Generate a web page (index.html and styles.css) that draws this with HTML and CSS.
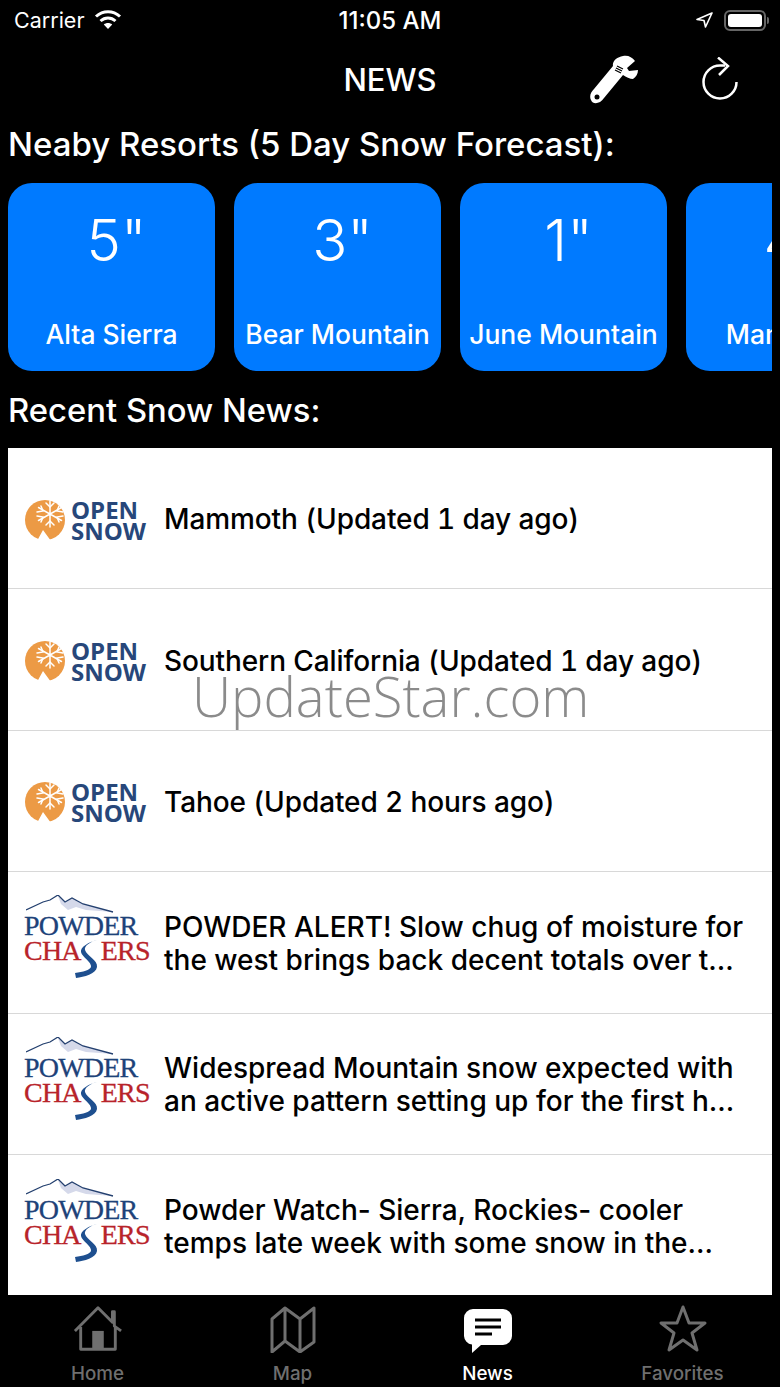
FILE: index.html
```html
<!DOCTYPE html>
<html lang="en">
<head>
    <meta charset="UTF-8">
    <meta name="viewport" content="width=device-width, initial-scale=1.0">
    <title>News</title>
    <link rel="stylesheet" href="styles.css">
</head>
<body>
    <svg class="defs" width="0" height="0">
        <symbol id="sun" viewBox="0 0 42 40">
            <circle cx="20" cy="20" r="20" fill="#ec9a45"/>
            <path fill="#fff" d="M12 41l6-11 8 11zM33 41l7-15h2v15z"/>
            <g stroke="#fff" stroke-width="1.500" fill="none" stroke-linecap="round">
                <path d="M25 1v26M13.500 7.500l23 13M36.500 7.500l-23 13"/>
                <path d="M21 3l4 4 4-4M12 12l6-1-2-5M38 12l-6-1 2-5M12 16l6 1-2 5M38 16l-6 1 2 5M21 25l4-4 4 4"/>
            </g>
        </symbol>
        <symbol id="peaks" viewBox="0 0 88 18">
            <path fill="#d5d9ea" d="M32 1l7 6 7-4 11 6 30 8-27-2-10-3-8 3-7-6z"/>
            <path fill="none" stroke="#24406f" stroke-width="1.300" d="M0 15l17-8 7-2 8-5 7 7 7-4 11 6 30 8"/>
        </symbol>
        <symbol id="road" viewBox="0 0 26 40">
            <path fill="#1e4f8f" d="M23 1C15 3 6 8 7 13c1 5 11 10 10 15-1 3-8 5-16 6l1 5c8-1 20-4 21-11 1-7-10-11-12-17-1-4 5-8 12-10z"/>
        </symbol>
    </svg>

    <div class="status-bar">
        <div class="status-left">
            <span>Carrier</span>
            <svg class="wifi" viewBox="0 0 28 20">
                <path fill="none" stroke="#fff" stroke-width="3" d="M2 7.500c7-6.500 17-6.500 24 0M6.500 12c4.500-4 10.500-4 15 0"/>
                <path fill="#fff" d="M14 20l-4.200-4.500c2.500-2 5.900-2 8.400 0z"/>
            </svg>
        </div>
        <div class="status-time">11:05 AM</div>
        <div class="status-right">
            <svg class="location" viewBox="0 0 17 16">
                <path fill="none" stroke="#fff" stroke-width="1.600" stroke-linejoin="round" d="M16 1L1 7.500l7 1 1.500 6.500z"/>
            </svg>
            <div class="battery"><div class="battery-fill"></div></div>
            <div class="battery-cap"></div>
        </div>
    </div>

    <div class="nav-bar">
        <h1>NEWS</h1>
        <div class="nav-actions">
            <svg class="wrench" viewBox="0 0 48 50">
                <path fill="#fff" d="M33 1C38 0 42 2 45 6L37 13 39 16 48 15C48 19 46 22 43 24 40 24 36 22 33 20L14 43C10 49 3 50 1 45-1 41 1 37 4 34L23 11C22 6 27 2 33 1Z"/>
                <circle cx="7" cy="42" r="2.500" fill="#000"/>
                <path stroke="#000" stroke-width="1.200" d="M26 13l6 3M27 11l6 3M25 15l6 3"/>
            </svg>
            <svg class="refresh" viewBox="0 0 38 44">
                <path fill="none" stroke="#fff" stroke-width="2.500" d="M24 8.500H19A16.500 16.500 0 1 0 35.500 25"/>
                <path fill="none" stroke="#fff" stroke-width="2.500" d="M17 0.500l10 8.500-9 9"/>
            </svg>
        </div>
    </div>

    <h2 class="section-title first">Neaby Resorts (5 Day Snow Forecast):</h2>

    <div class="resorts">
        <div class="resort"><div class="snow">5"</div><div class="resort-name">Alta Sierra</div></div>
        <div class="resort"><div class="snow">3"</div><div class="resort-name">Bear Mountain</div></div>
        <div class="resort"><div class="snow">1"</div><div class="resort-name">June Mountain</div></div>
        <div class="resort"><div class="snow">4"</div><div class="resort-name">Mammoth</div></div>
    </div>

    <h2 class="section-title second">Recent Snow News:</h2>

    <div class="news-list">
        <div class="news-row">
            <div class="logo-open">
                <svg class="sun"><use href="#sun"/></svg>
                <div class="open-text">OPEN<br>SNOW</div>
            </div>
            <div class="news-title updated">Mammoth (Updated 1 day ago)</div>
        </div>
        <div class="news-row">
            <div class="logo-open">
                <svg class="sun"><use href="#sun"/></svg>
                <div class="open-text">OPEN<br>SNOW</div>
            </div>
            <div class="news-title updated">Southern California (Updated 1 day ago)</div>
        </div>
        <div class="news-row">
            <div class="logo-open">
                <svg class="sun"><use href="#sun"/></svg>
                <div class="open-text">OPEN<br>SNOW</div>
            </div>
            <div class="news-title updated">Tahoe (Updated 2 hours ago)</div>
        </div>
        <div class="news-row">
            <div class="logo-powder">
                <svg class="peaks"><use href="#peaks"/></svg>
                <div class="powder-text">POWDER</div>
                <div class="chasers-text"><span>CHA</span><span class="chasers-end">ERS</span></div>
                <svg class="road"><use href="#road"/></svg>
            </div>
            <div class="news-title">POWDER ALERT! Slow chug of moisture for<br>the west brings back decent totals over t...</div>
        </div>
        <div class="news-row">
            <div class="logo-powder">
                <svg class="peaks"><use href="#peaks"/></svg>
                <div class="powder-text">POWDER</div>
                <div class="chasers-text"><span>CHA</span><span class="chasers-end">ERS</span></div>
                <svg class="road"><use href="#road"/></svg>
            </div>
            <div class="news-title">Widespread Mountain snow expected with<br>an active pattern setting up for the first h...</div>
        </div>
        <div class="news-row">
            <div class="logo-powder">
                <svg class="peaks"><use href="#peaks"/></svg>
                <div class="powder-text">POWDER</div>
                <div class="chasers-text"><span>CHA</span><span class="chasers-end">ERS</span></div>
                <svg class="road"><use href="#road"/></svg>
            </div>
            <div class="news-title">Powder Watch- Sierra, Rockies- cooler<br>temps late week with some snow in the...</div>
        </div>
    </div>

    <div class="tab-bar">
        <div class="tab">
            <svg class="tab-icon" viewBox="0 0 52 48">
                <path fill="none" stroke="#6f6f6f" stroke-width="3" stroke-linejoin="round" d="M2 26L26 2l15 15V6h2v15l7 5M8 22v23h36V22"/>
                <rect x="20" y="26" width="12" height="19" fill="#6f6f6f"/>
            </svg>
            <span>Home</span>
        </div>
        <div class="tab">
            <svg class="tab-icon" viewBox="0 0 46 48">
                <path fill="none" stroke="#6f6f6f" stroke-width="3" stroke-linejoin="round" d="M2 14L15 3l15 11L44 3v34L30 47 15 36 2 47zM15 3v33M30 14v33"/>
            </svg>
            <span>Map</span>
        </div>
        <div class="tab active">
            <svg class="tab-icon" viewBox="0 -4 48 48">
                <path fill="#fff" d="M9 0h30a9 9 0 0 1 9 9v18a9 9 0 0 1-9 9H17L8 44V35.500A9 9 0 0 1 0 27V9a9 9 0 0 1 9-9z"/>
                <path stroke="#000" stroke-width="3" d="M11 11h26M11 18h26M11 25h17"/>
            </svg>
            <span>News</span>
        </div>
        <div class="tab">
            <svg class="tab-icon" viewBox="0 0 48 48">
                <path fill="none" stroke="#6f6f6f" stroke-width="3" stroke-linejoin="round" d="M24 2l6 16h16L33 28l5 17-14-10-14 10 5-17L2 18h16z"/>
            </svg>
            <span>Favorites</span>
        </div>
    </div>

    <div class="watermark">UpdateStar.com</div>
</body>
</html>
```

FILE: styles.css
```css
* {
    box-sizing: border-box;
}
body {
    font-family: Inter, "Noto Sans", sans-serif;
    background: #000;
    color: #fff;
    margin: 0;
    width: 780px;
    height: 1387px;
    overflow: hidden;
    position: relative;
}
.defs {
    display: block;
    height: 0;
}
.status-bar {
    height: 40px;
    display: grid;
    grid-template-columns: 1fr auto 1fr;
    align-items: center;
    padding: 0 11px 0 14px;
    font-size: 21.500px;
}
.status-left {
    display: flex;
    align-items: center;
    gap: 10px;
}
.wifi {
    width: 28px;
    height: 20px;
    margin-top: -3px;
}
.status-time {
    font-size: 24px;
    font-weight: 500;
    margin-right: 3px;
}
.status-right {
    display: flex;
    align-items: center;
    justify-content: flex-end;
}
.location {
    width: 17px;
    height: 16px;
    margin-right: 11px;
}
.battery {
    width: 42px;
    height: 21px;
    border: 2px solid #666;
    border-radius: 6px;
    padding: 2px;
}
.battery-fill {
    height: 100%;
    background: #fff;
    border-radius: 3px;
}
.battery-cap {
    width: 2px;
    height: 7px;
    margin-left: 1px;
    background: #666;
    border-radius: 0 2px 2px 0;
}
.nav-bar {
    height: 80px;
    position: relative;
    display: flex;
    justify-content: center;
    align-items: center;
    padding-bottom: 2px;
}
.nav-bar h1 {
    margin: 0;
    font-size: 31px;
    font-weight: 500;
}
.nav-actions {
    position: absolute;
    top: 15px;
    left: 590px;
    display: flex;
    align-items: flex-start;
    gap: 63px;
}
.wrench {
    width: 48px;
    height: 50px;
}
.refresh {
    width: 38px;
    height: 44px;
    margin-top: 2px;
}
.section-title {
    margin: 0;
    padding-left: 8px;
    font-size: 33px;
    font-weight: 500;
    line-height: 40px;
}
.section-title.first {
    margin-top: 4px;
}
.section-title.second {
    margin-top: 19px;
    font-size: 32.800px;
}
.resorts {
    display: flex;
    gap: 19px;
    margin: 19px 8px 0;
    overflow: hidden;
}
.resort {
    flex: 0 0 207px;
    height: 188px;
    background: #007aff;
    border-radius: 24px;
    text-align: center;
}
.snow {
    font-size: 58px;
    font-weight: 300;
    line-height: 70px;
    padding: 22px 0 0 10px;
}
.resort-name {
    font-size: 26.500px;
    font-weight: 500;
    line-height: 32px;
    margin-top: 43px;
    white-space: nowrap;
}
.news-list {
    margin: 18px 8px 0;
    background: #fff;
    height: 847px;
    color: #000;
}
.news-row {
    height: 141.400px;
    padding-top: 3px;
    display: flex;
    align-items: center;
    border-bottom: 1px solid #d8d8d8;
}
.news-row:last-child {
    border-bottom: none;
}
.logo-open {
    width: 157px;
    padding-left: 17px;
    display: flex;
    align-items: center;
    gap: 4px;
}
.sun {
    width: 42px;
    height: 40px;
    flex: none;
}
.open-text {
    font-family: "Open Sans", sans-serif;
    font-size: 24px;
    font-weight: 700;
    line-height: 21px;
    color: #27477a;
}
.logo-powder {
    width: 157px;
    padding-left: 16px;
    margin-bottom: 29px;
    position: relative;
    font-family: "Liberation Serif", serif;
    font-size: 28px;
    line-height: 25px;
    letter-spacing: -0.800px;
    -webkit-text-stroke: 0.300px currentColor;
}
.peaks {
    display: block;
    width: 88px;
    height: 18px;
    margin-left: 2px;
}
.powder-text {
    color: #1d4279;
}
.chasers-text {
    color: #b8232a;
    display: flex;
}
.chasers-end {
    margin-left: 20px;
}
.road {
    position: absolute;
    left: 66px;
    top: 44px;
    width: 26px;
    height: 40px;
}
.news-title {
    font-size: 28px;
    font-weight: 500;
    line-height: 33px;
    white-space: nowrap;
    margin-left: -1px;
}
.news-title.updated {
    font-variant-numeric: tabular-nums;
    letter-spacing: -0.100px;
}
.tab-bar {
    display: grid;
    grid-template-columns: repeat(4, 195px);
    height: 92px;
}
.tab {
    display: flex;
    flex-direction: column;
    align-items: center;
    padding-top: 10px;
    color: #6f6f6f;
    font-size: 18.800px;
    font-weight: 500;
}
.tab.active {
    color: #fff;
}
.tab-icon {
    width: 50px;
    height: 48px;
    margin-bottom: 9px;
}
.watermark {
    position: absolute;
    left: 192px;
    top: 663px;
    font-family: "Open Sans", sans-serif;
    font-size: 54.400px;
    font-weight: 300;
    line-height: 66px;
    color: rgba(100, 100, 100, 0.75);
}
```
